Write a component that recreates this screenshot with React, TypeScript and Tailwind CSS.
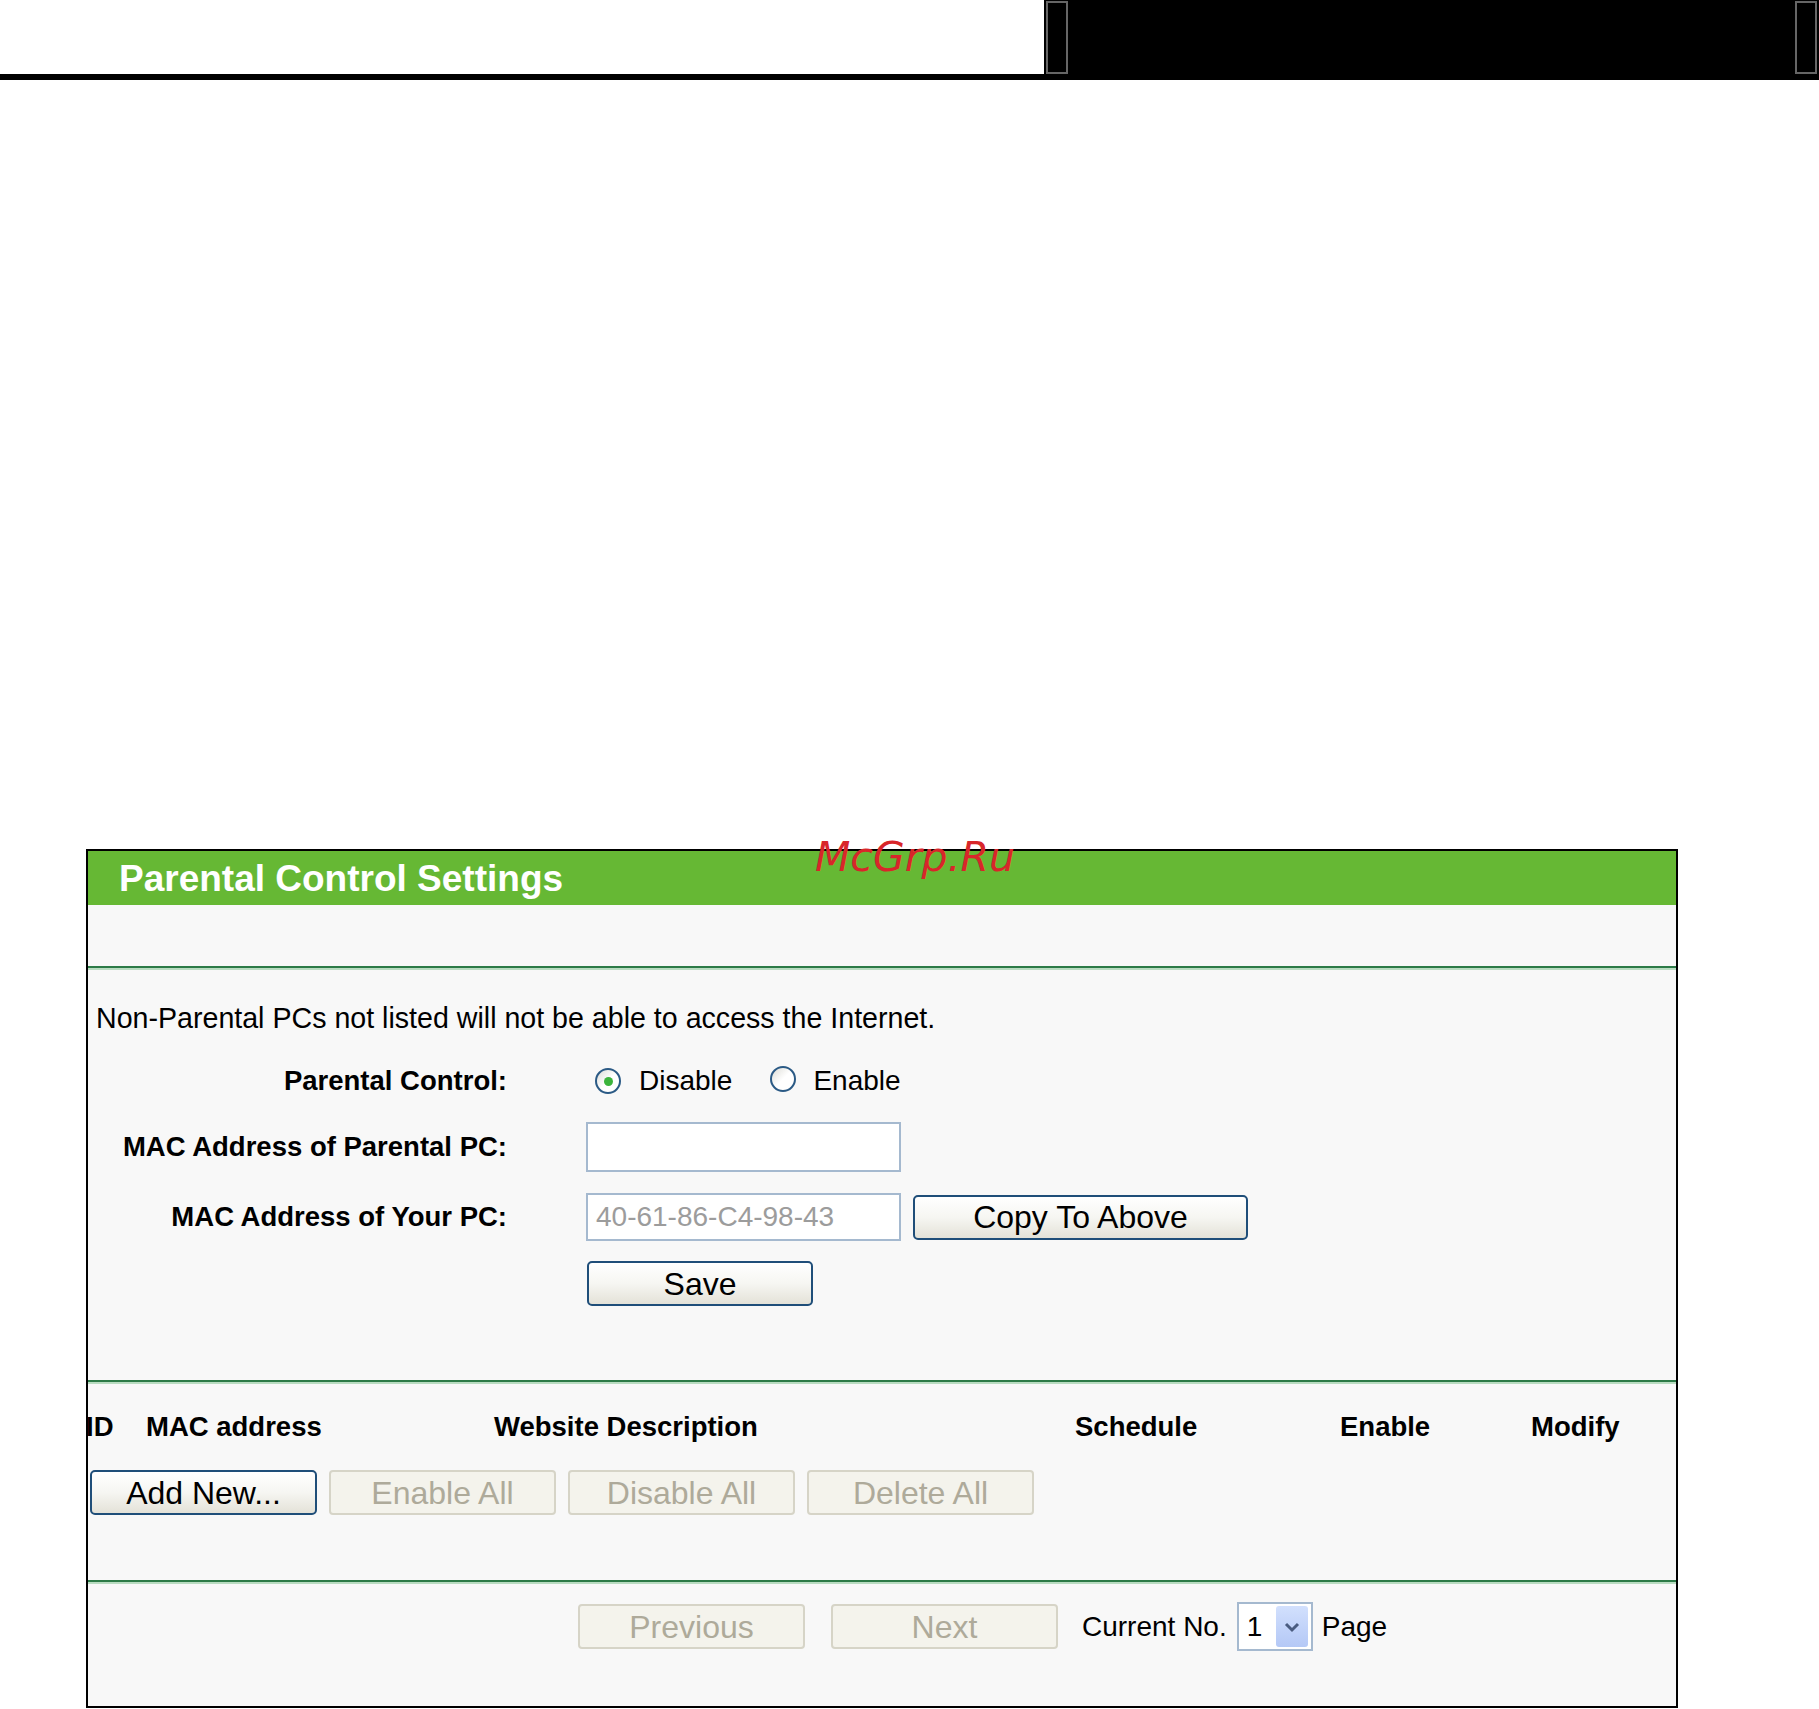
import React from "react";

function Radio({ checked }: { checked?: boolean }) {
  return (
    <span className="relative inline-flex h-[26px] w-[26px] items-center justify-center rounded-full border-2 border-[#2b5a85] bg-gradient-to-br from-[#dcdcd6] via-white to-white">
      {checked && <span className="h-[9px] w-[9px] rounded-full bg-[#3cb43c]" />}
    </span>
  );
}

function Btn({ children, w, disabled }: { children: React.ReactNode; w: string; disabled?: boolean }) {
  if (disabled) {
    return (
      <button
        className={`${w} h-[45px] shrink-0 rounded-[4px] border-2 border-[#d6d4c7] bg-[#f4f3ec] text-[32px] leading-none text-[#aeaa9a]`}
      >
        {children}
      </button>
    );
  }
  return (
    <button
      className={`${w} h-[45px] shrink-0 rounded-[5px] border-2 border-[#1f4e79] bg-gradient-to-b from-white via-[#f6f6f2] to-[#e4e2d8] text-[32px] leading-none text-black`}
    >
      {children}
    </button>
  );
}

function GreenRule() {
  return (
    <div className="h-[4px] w-full">
      <div className="h-[2px] bg-[#2c7a47]" />
      <div className="h-[2px] bg-[#b9dcc1]" />
    </div>
  );
}

export default function App() {
  const label = "w-[419px] shrink-0 text-right text-[27.5px] font-bold leading-none text-black";
  return (
    <div
      className="relative min-h-[1709px] w-full overflow-hidden bg-white"
      style={{ fontFamily: '"Liberation Sans", Arial, sans-serif' }}
    >
      {/* top strip */}
      <div className="flex h-[80px]">
        <div className="h-full w-[1044px] border-b-[6px] border-black bg-white" />
        <div className="flex flex-1 items-start justify-between bg-black px-[2px] pt-[1px]">
          <div className="h-[73px] w-[22px] border-2 border-[#666]" />
          <div className="h-[73px] w-[22px] border-2 border-[#666]" />
        </div>
      </div>

      {/* watermark */}
      <div
        className="absolute left-[815px] top-[837px] z-10 text-[41px] italic leading-none text-[#d8262a]"
        style={{ fontFamily: '"DejaVu Sans", sans-serif' }}
      >
        McGrp.Ru
      </div>

      {/* panel */}
      <div className="ml-[86px] mt-[769px] w-[1592px] border-2 border-black bg-[#f8f8f8]">
        <div className="flex h-[54px] items-center bg-[#66b834] pl-[31px]">
          <span className="text-[37px] font-bold leading-none text-white">Parental Control Settings</span>
        </div>
        <div className="h-[61px]" />
        <GreenRule />

        {/* section 1 */}
        <div className="flex h-[410px] flex-col">
          <div className="mt-[32px] flex h-[32px] items-center pl-[8px] text-[28.6px] leading-none text-black">
            Non-Parental PCs not listed will not be able to access the Internet.
          </div>
          <div className="mt-[27px] flex h-[40px] items-center">
            <div className={label}>Parental Control:</div>
            <div className="ml-[88px] flex items-center text-[28px] leading-none text-black">
              <Radio checked />
              <span className="ml-[18px]">Disable</span>
              <span className="ml-[38px]">
                <Radio />
              </span>
              <span className="ml-[17px]">Enable</span>
            </div>
          </div>
          <div className="mt-[21px] flex h-[50px] items-center">
            <div className={label}>MAC Address of Parental PC:</div>
            <input
              className="ml-[79px] h-[50px] w-[315px] border-2 border-[#a5b9cf] bg-white px-[8px] text-[28px] outline-none"
              defaultValue=""
            />
          </div>
          <div className="mt-[21px] flex h-[48px] items-center">
            <div className={`${label} self-start pt-[10px]`}>MAC Address of Your PC:</div>
            <div className="ml-[79px] flex h-[48px] w-[315px] items-center border-2 border-[#a5b9cf] bg-white pl-[8px] text-[28px] leading-none text-[#9c9c9c]">
              40-61-86-C4-98-43
            </div>
            <div className="ml-[12px]">
              <Btn w="w-[335px]">Copy To Above</Btn>
            </div>
          </div>
          <div className="mt-[20px] flex h-[45px] items-center pl-[499px]">
            <Btn w="w-[226px]">Save</Btn>
          </div>
        </div>
        <GreenRule />

        {/* section 2 */}
        <div className="flex h-[196px] flex-col">
          <div className="mt-[27px] flex h-[32px] items-center text-[27.5px] font-bold leading-none text-black">
            <div className="w-[58px] shrink-0 -ml-[2px]">ID</div>
            <div className="w-[348px] shrink-0 ml-[2px]">MAC address</div>
            <div className="w-[581px] shrink-0">Website Description</div>
            <div className="w-[265px] shrink-0">Schedule</div>
            <div className="w-[191px] shrink-0">Enable</div>
            <div className="shrink-0">Modify</div>
          </div>
          <div className="mt-[27px] flex h-[45px] items-center gap-[12px] pl-[2px]">
            <Btn w="w-[227px]">Add New...</Btn>
            <Btn w="w-[227px]" disabled>
              Enable All
            </Btn>
            <Btn w="w-[227px]" disabled>
              Disable All
            </Btn>
            <Btn w="w-[227px]" disabled>
              Delete All
            </Btn>
          </div>
        </div>
        <GreenRule />

        {/* section 3 */}
        <div className="flex h-[122px] flex-col">
          <div className="mt-[18px] flex h-[49px] items-center pl-[490px] text-[28px] leading-none text-black">
            <Btn w="w-[227px]" disabled>
              Previous
            </Btn>
            <div className="ml-[26px]">
              <Btn w="w-[227px]" disabled>
                Next
              </Btn>
            </div>
            <span className="ml-[24px]">Current No.</span>
            <div className="ml-[10px] flex h-[49px] w-[76px] items-center border-2 border-[#a5b9cf] bg-white pl-[8px] pr-[3px]">
              <span className="flex-1">1</span>
              <span className="flex h-[41px] w-[32px] items-center justify-center rounded-[3px] bg-gradient-to-b from-[#d2e0fd] to-[#b4c8f6]">
                <svg width="16" height="12" viewBox="0 0 16 12">
                  <path d="M2 3 L8 9 L14 3" fill="none" stroke="#4a5c80" strokeWidth="3" />
                </svg>
              </span>
            </div>
            <span className="ml-[9px]">Page</span>
          </div>
        </div>
      </div>
    </div>
  );
}
